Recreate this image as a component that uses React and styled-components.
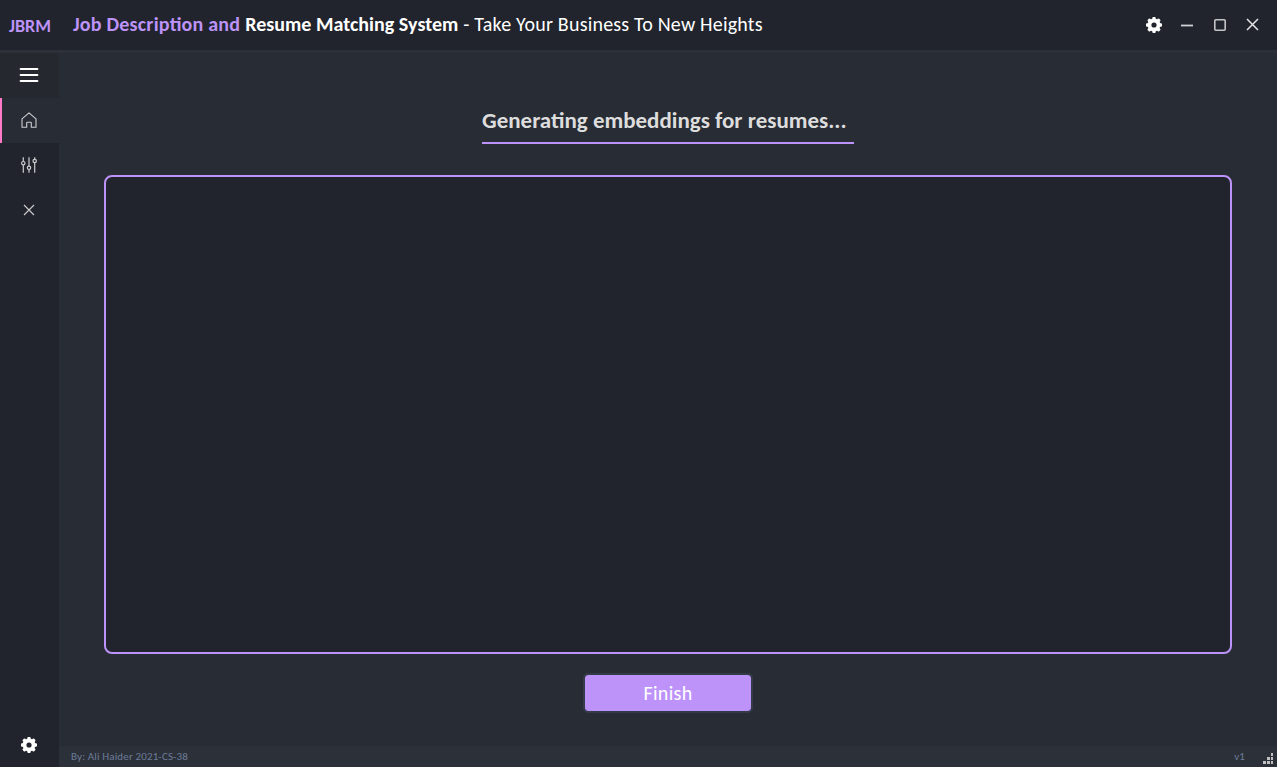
import React from "react";
import styled, { createGlobalStyle } from "styled-components";

const Global = createGlobalStyle`
  * { box-sizing: border-box; }
  html, body { margin: 0; height: 100%; overflow: hidden; background: #282c34; }
  body { font-family: Carlito, Calibri, Lato, sans-serif; font-feature-settings: "liga" 1; }
`;

const Window = styled.div`
  display: flex;
  flex-direction: column;
  width: 100vw;
  height: 100vh;
  background: #282c34;
`;

const TitleBar = styled.header`
  display: flex;
  flex: 0 0 53px;
  align-items: center;
  background: #21242c;
  border-bottom: 3px solid #2c3039;
`;

const Brand = styled.div`
  width: 73px;
  padding: 1px 0 0 9px;
  color: #bd93f9;
  font-size: 18px;
  font-weight: 700;
  line-height: 20px;
  white-space: nowrap;
`;

const Title = styled.h1`
  display: flex;
  flex: 1;
  gap: 5px;
  margin: 0;
  padding-bottom: 2px;
  font-size: 20px;
  font-weight: 400;
  line-height: 24px;
  white-space: nowrap;
`;

const TitlePart = styled.span`
  color: ${(p) => p.$color || "#fff"};
  font-weight: ${(p) => p.$weight || 400};
  letter-spacing: ${(p) => p.$spacing || "0"};
`;

const WindowControls = styled.div`
  display: flex;
  padding-right: 8px;
`;

const ControlButton = styled.button`
  display: grid;
  place-items: center;
  width: 33px;
  height: 33px;
  padding: 0;
  border: 0;
  background: none;
`;

const Body = styled.div`
  display: flex;
  flex: 1;
  min-height: 0;
`;

const Sidebar = styled.nav`
  display: flex;
  flex: 0 0 59px;
  flex-direction: column;
  background: #21242c;
`;

const NavButton = styled.button`
  display: grid;
  place-items: center;
  width: 59px;
  height: 45px;
  margin-top: ${(p) => (p.$bottom ? "auto" : 0)};
  padding: 0 1px ${(p) => (p.$bottom ? 0 : 1)}px 0;
  border: 0;
  background: ${(p) => p.$bg || "transparent"};
  box-shadow: ${(p) => (p.$active ? "inset 2px 0 #ff79c6" : "none")};
`;

const Content = styled.main`
  display: flex;
  flex: 1;
  flex-direction: column;
  min-width: 0;
`;

const Page = styled.section`
  display: flex;
  flex: 1;
  flex-direction: column;
  align-items: center;
  padding: 52px 45px 0;
`;

const Heading = styled.h2`
  width: 372px;
  height: 39px;
  margin: 0 0 31px;
  border-bottom: 2px solid #bd93f9;
  color: #dddddd;
  font-size: 23px;
  font-weight: 700;
  line-height: 31px;
  white-space: nowrap;
`;

const OutputPanel = styled.div`
  width: 100%;
  height: 479px;
  border: 2px solid #bd93f9;
  border-radius: 8px;
  background: #21242c;
`;

const FinishButton = styled.button`
  width: 170px;
  height: 40px;
  margin-top: 19px;
  padding: 0;
  border: 2px solid #343b48;
  border-radius: 5px;
  background: #bd93f9;
  background-clip: padding-box;
  color: #fff;
  font: 400 20px/36px Carlito, Calibri, Lato, sans-serif;
  letter-spacing: 0.3px;
`;

const StatusBar = styled.footer`
  display: flex;
  flex: 0 0 21px;
  justify-content: space-between;
  padding: 0 4px 0 12px;
  background: #2c3039;
  color: #6d7c98;
  font-size: 11px;
  letter-spacing: 0.14px;
  line-height: 21px;
`;

const StatusEnd = styled.div`
  display: flex;
  gap: 18px;
`;

const GripSlot = styled.span`
  display: flex;
  padding-top: 7px;
`;

const teeth = [0, 45, 90, 135, 180, 225, 270, 315];

const Gear = () => (
  <svg width="16" height="16" viewBox="0 0 16 16">
    <circle cx="8" cy="8" r="4.55" fill="none" stroke="#fff" strokeWidth="3.9" />
    {teeth.map((a) => (
      <rect key={a} x="6.3" y="0" width="3.4" height="3" rx="1" fill="#fff" transform={`rotate(${a} 8 8)`} />
    ))}
  </svg>
);

const Minimize = () => (
  <svg width="14" height="14"><path d="M1 7.5h12" stroke="#d0d1d3" strokeWidth="1.8" /></svg>
);

const Maximize = () => (
  <svg width="14" height="14"><rect x="1.8" y="1.8" width="10.4" height="10.4" rx="1" fill="none" stroke="#c4c5c8" strokeWidth="1.6" /></svg>
);

const CloseWindow = () => (
  <svg width="14" height="14"><path d="m1 1 11 11m0-11-11 11" stroke="#e4e4e6" strokeWidth="1.5" /></svg>
);

const Menu = () => (
  <svg width="20" height="16"><path d="M1.7 2h16.6M1.7 8h16.6M1.7 14h16.6" stroke="#fff" strokeWidth="2.2" strokeLinecap="round" /></svg>
);

const Home = () => (
  <svg width="16" height="16" fill="none" stroke="#cdced0" strokeWidth="1.1">
    <path d="M1 15.3V6.8L8 .9l7 5.9v8.5h-4.7v-4.4q0-.7-.7-.7H6.4q-.7 0-.7.7v4.4z" strokeLinejoin="round" />
  </svg>
);

const Sliders = () => (
  <svg width="16" height="16" fill="none" stroke="#cdced0" strokeWidth="1.2">
    <path d="M2.3.3v4.2m0 3.4v7.8M8 .3v8.8m0 3.4v3.2M13.7.3v2m0 3.4v10" />
    <circle cx="2.3" cy="6.2" r="1.7" />
    <circle cx="8" cy="10.8" r="1.7" />
    <circle cx="13.7" cy="4" r="1.7" />
  </svg>
);

const Close = () => (
  <svg width="12" height="12"><path d="m1 1 10 10m0-10L1 11" stroke="#cdced0" strokeWidth="1.1" /></svg>
);

const Grip = () => (
  <svg width="10" height="11" fill="#c0c0c0">
    <path d="M8 0h2v3H8zM4 4h3v3H4zM8 4h2v3H8zM0 8h3v3H0zM4 8h3v3H4zM8 8h2v3H8z" />
  </svg>
);

export default function App() {
  return (
    <>
      <Global />
      <Window>
        <TitleBar>
          <Brand>JBRM</Brand>
          <Title>
            <TitlePart $color="#bd93f9" $weight={700} $spacing="0.21px">Job Description and</TitlePart>
            <TitlePart $weight={700} $spacing="0.03px">Resume Matching System</TitlePart>
            <TitlePart $spacing="0.2px">- Take Your Business To New Heights</TitlePart>
          </Title>
          <WindowControls>
            <ControlButton aria-label="Settings"><Gear /></ControlButton>
            <ControlButton aria-label="Minimize"><Minimize /></ControlButton>
            <ControlButton aria-label="Maximize"><Maximize /></ControlButton>
            <ControlButton aria-label="Close"><CloseWindow /></ControlButton>
          </WindowControls>
        </TitleBar>
        <Body>
          <Sidebar>
            <NavButton aria-label="Menu" $bg="#25292f"><Menu /></NavButton>
            <NavButton aria-label="Home" $bg="#282c34" $active><Home /></NavButton>
            <NavButton aria-label="Options"><Sliders /></NavButton>
            <NavButton aria-label="Exit"><Close /></NavButton>
            <NavButton aria-label="Preferences" $bottom><Gear /></NavButton>
          </Sidebar>
          <Content>
            <Page>
              <Heading>Generating embeddings for resumes...</Heading>
              <OutputPanel />
              <FinishButton>Finish</FinishButton>
            </Page>
            <StatusBar>
              <span>By: Ali Haider 2021-CS-38</span>
              <StatusEnd><span>v1</span><GripSlot><Grip /></GripSlot></StatusEnd>
            </StatusBar>
          </Content>
        </Body>
      </Window>
    </>
  );
}
